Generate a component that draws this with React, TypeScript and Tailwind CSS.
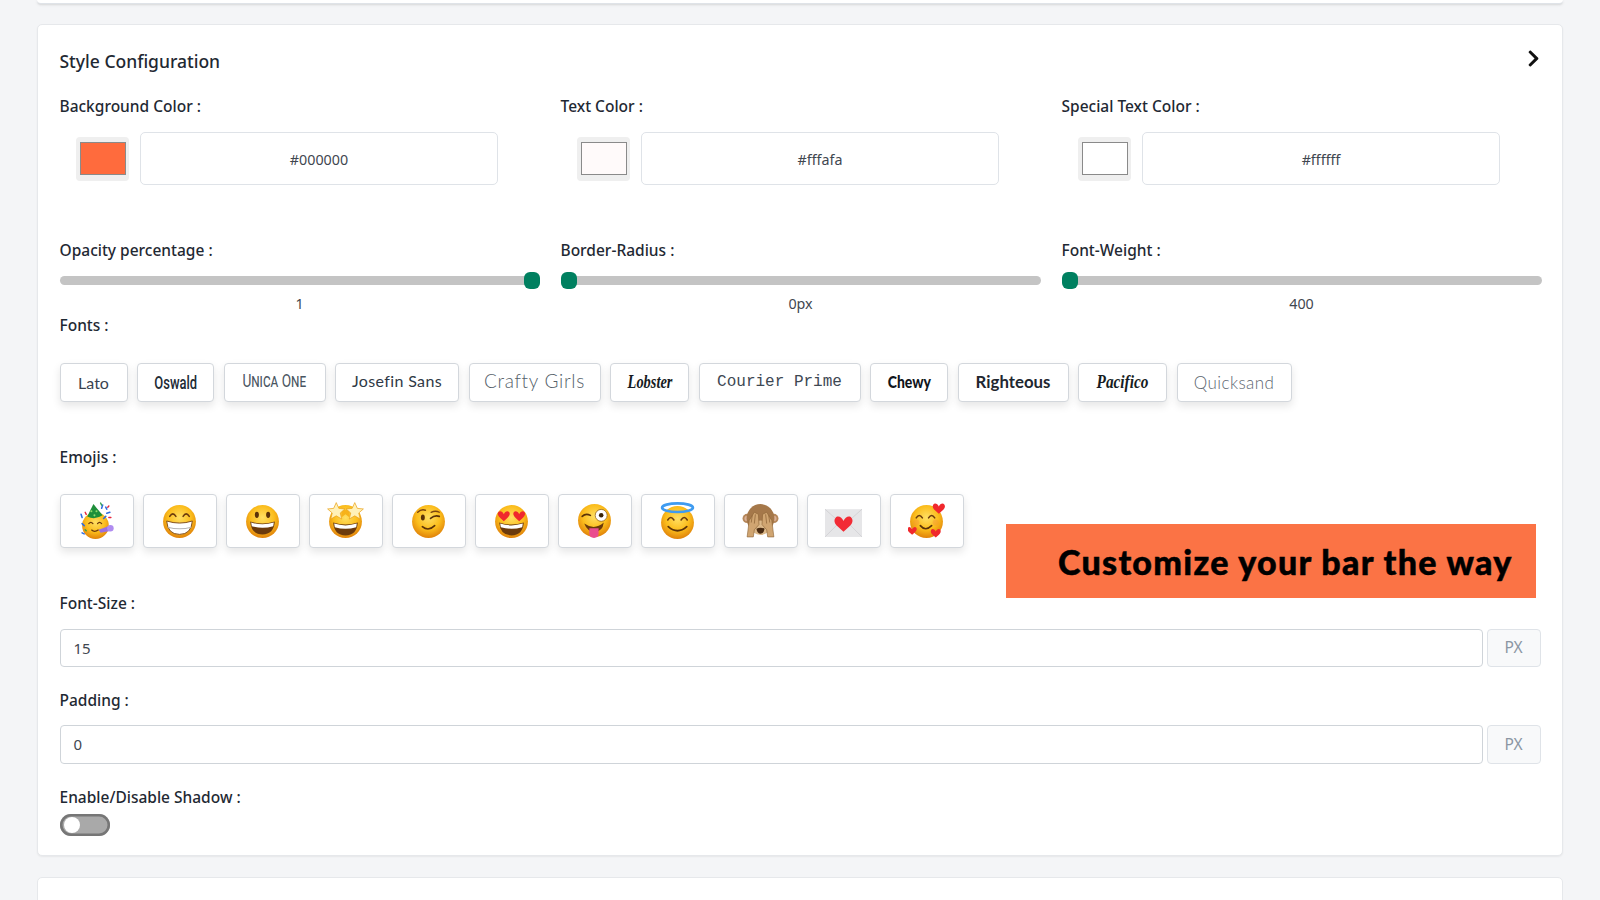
import React from "react";
import { FaChevronRight } from "react-icons/fa";

const Face = ({ cx = 18, cy = 19, r = 16 }: { cx?: number; cy?: number; r?: number }) => (
  <>
    <defs>
      <radialGradient id="emojiFace" cx="50%" cy="38%" r="62%">
        <stop offset="0%" stopColor="#ffdf63" />
        <stop offset="58%" stopColor="#fbbd1c" />
        <stop offset="100%" stopColor="#e0820a" />
      </radialGradient>
    </defs>
    <circle cx={cx} cy={cy} r={r} fill="url(#emojiFace)" />
  </>
);

const Svg = ({ children }: { children: React.ReactNode }) => (
  <svg viewBox="0 0 36 36" className="w-[37px] h-[37px] block -translate-y-[1px]">
    {children}
  </svg>
);

const Heart = ({ x, y, s, c = "#f0282d" }: { x: number; y: number; s: number; c?: string }) => (
  <path
    transform={`translate(${x} ${y}) scale(${s})`}
    d="M0 3.6C-1 1 -4 -.6 -5.6 1.4C-7 3.2 -6 5.6 -4 7.4L0 11L4 7.4C6 5.6 7 3.2 5.6 1.4C4 -.6 1 1 0 3.6Z"
    fill={c}
  />
);

const ArcEye = ({ x, y }: { x: number; y: number }) => (
  <path d={`M${x - 3} ${y + 1.5}Q${x} ${y - 3.4} ${x + 3} ${y + 1.5}`} fill="none" stroke="#6b3a0c" strokeWidth="1.5" strokeLinecap="round" />
);

const Star = ({ x, y, s }: { x: number; y: number; s: number }) => (
  <path
    transform={`translate(${x} ${y}) scale(${s})`}
    d="M0 -6L1.8 -2L6 -1.6L2.8 1.2L3.8 5.4L0 3.2L-3.8 5.4L-2.8 1.2L-6 -1.6L-1.8 -2Z"
    fill="#fff1b8"
    stroke="#eaa21b"
    strokeWidth=".5"
  />
);

const OpenMouth = ({ top = 19 }: { top?: number }) => (
  <>
    <path d={`M6 ${top}Q18 ${top + 4} 30 ${top}Q29 ${top + 12.5} 18 ${top + 12.5}Q7 ${top + 12.5} 6 ${top}Z`} fill="#6b3a0c" />
    <path d={`M7 ${top + 1}Q18 ${top + 4.5} 29 ${top + 1}L28.4 ${top + 4.5}Q18 ${top + 7.5} 7.6 ${top + 4.5}Z`} fill="#fff" />
  </>
);

const emojis: React.ReactNode[] = [
  <Svg key="party">
    <Face cx={17} cy={23} r={13} />
    <path d="M9 14L15 2L24 13Q16 18 9 14Z" fill="#1f8f3a" />
    <circle cx="13" cy="9" r="1" fill="#8fdc6a" />
    <circle cx="18" cy="9" r="1" fill="#8fdc6a" />
    <circle cx="16" cy="13" r="1" fill="#8fdc6a" />
    <path d="M10.5 21Q12.5 18.5 14.5 21M19 21Q21 18.5 23 21" fill="none" stroke="#6b3a0c" strokeWidth="1.2" strokeLinecap="round" />
    <path d="M20 27L31 23L32.5 28L22 30Z" fill="#9a6fe0" />
    <circle cx="31.5" cy="25.5" r="3.2" fill="#b08cf0" />
    <path d="M13 27Q16 30 20 27" fill="none" stroke="#6b3a0c" strokeWidth="1.2" />
    <path d="M3 12l1 3M4 21l2 2M4 30l2 1M27 5l1 2M24 3l-1 3M31 10l-3 1M27 14l-2 2" stroke="#2f6de0" strokeWidth="1.5" strokeLinecap="round" />
    <path d="M7 10l1 2M30 4l-1 1M32 15l-2 0" stroke="#e8263e" strokeWidth="1.4" strokeLinecap="round" />
    <path d="M22 1l1 2M7 27l1 1" stroke="#2e9e4f" strokeWidth="1.3" strokeLinecap="round" />
  </Svg>,
  <Svg key="beam">
    <Face />
    <ArcEye x={11.5} y={12.5} />
    <ArcEye x={24.5} y={12.5} />
    <path d="M5.5 18.5Q18 22.5 30.5 18.5Q29.5 31.5 18 31.5Q6.5 31.5 5.5 18.5Z" fill="#fff" stroke="#7a4410" strokeWidth=".9" />
    <path d="M6.5 24.5Q18 27.5 29.5 24.5" fill="none" stroke="#b5b5b5" strokeWidth="1" />
  </Svg>,
  <Svg key="grin">
    <Face />
    <ellipse cx="12.5" cy="12.5" rx="2" ry="3" fill="#5b3208" />
    <ellipse cx="23.5" cy="12.5" rx="2" ry="3" fill="#5b3208" />
    <OpenMouth />
  </Svg>,
  <Svg key="star">
    <Face />
    <OpenMouth top={20} />
    <path d="M14 5l4 3l4 -3l0 10l-4 -3l-4 3Z" fill="#f7b21a" />
    <Star x={9} y={9} s={1.4} />
    <Star x={27} y={9} s={1.4} />
  </Svg>,
  <Svg key="wink">
    <Face />
    <ellipse cx="12.5" cy="15" rx="1.9" ry="2.9" fill="#5b3208" />
    <path d="M7.5 10Q11 6.5 15 8" fill="none" stroke="#7a4410" strokeWidth="1.4" strokeLinecap="round" />
    <path d="M20 16Q24 12.5 28.5 14" fill="none" stroke="#5b3208" strokeWidth="1.6" strokeLinecap="round" />
    <path d="M20.5 10Q25 8 28.5 10" fill="none" stroke="#7a4410" strokeWidth="1.3" strokeLinecap="round" />
    <path d="M12 24Q18 29 24 23" fill="none" stroke="#5b3208" strokeWidth="1.6" strokeLinecap="round" />
  </Svg>,
  <Svg key="hearteyes">
    <Face />
    <OpenMouth top={20} />
    <Heart x={10.5} y={8.5} s={.92} />
    <Heart x={25.5} y={8.5} s={.92} />
  </Svg>,
  <Svg key="tongue">
    <Face cy={18} />
    <path d="M6 14Q9.5 10.5 14 13" fill="none" stroke="#5b3208" strokeWidth="1.6" strokeLinecap="round" />
    <circle cx="24.5" cy="13" r="5.8" fill="#fff" stroke="#8a5a14" strokeWidth=".7" />
    <circle cx="24.5" cy="13" r="2.2" fill="#3a2408" />
    <path d="M8 21Q18 28 27 20Q26 29 18 29Q11 29 8 21Z" fill="#6b3a0c" />
    <path d="M13 25.5H22V31Q22 35 17.5 35Q13 35 13 31Z" fill="#ea4d8f" />
  </Svg>,
  <Svg key="halo">
    <Face cy={20} />
    <ellipse cx="18" cy="5.5" rx="15" ry="4.2" fill="none" stroke="#3f9bf0" strokeWidth="2.6" />
    <ArcEye x={11.5} y={16} />
    <ArcEye x={24.5} y={16} />
    <path d="M9 24Q18 32 27 24" fill="none" stroke="#5b3208" strokeWidth="1.7" strokeLinecap="round" />
  </Svg>,
  <Svg key="monkey">
    <circle cx="5" cy="16" r="4.5" fill="#b5875a" />
    <circle cx="31" cy="16" r="4.5" fill="#b5875a" />
    <circle cx="5" cy="16" r="2.6" fill="#dcb196" />
    <circle cx="31" cy="16" r="2.6" fill="#dcb196" />
    <ellipse cx="18" cy="16" rx="13.5" ry="14" fill="#a5784a" />
    <ellipse cx="18" cy="25" rx="9" ry="7" fill="#dcb98a" />
    <path d="M14 26Q18 24 22 26Q21 31 18 31Q15 31 14 26Z" fill="#4a2c12" />
    <path d="M5 34L7 18L12 10L16 12L16.5 22L12 27L11 34Z" fill="#d0a571" stroke="#8b6235" strokeWidth=".6" />
    <path d="M31 34L29 18L24 10L20 12L19.5 22L24 27L25 34Z" fill="#d0a571" stroke="#8b6235" strokeWidth=".6" />
    <path d="M10 13L9 20M13 12L12 21M26 13L27 20M23 12L24 21" stroke="#8b6235" strokeWidth=".7" />
  </Svg>,
  <Svg key="letter">
    <rect x="0" y="7" width="36" height="27" fill="#e6e6e8" />
    <path d="M0 7L18 23L36 7M0 34L14 20M36 34L22 20" fill="none" stroke="#cfcfd2" strokeWidth=".8" />
    <Heart x={18} y={13.5} s={1.4} c="#f22b35" />
  </Svg>,
  <Svg key="hearts">
    <Face cy={19} r={16} />
    <ArcEye x={11} y={14} />
    <ArcEye x={23} y={14} />
    <circle cx="8" cy="20" r="3" fill="#f08a3c" opacity=".35" />
    <circle cx="27" cy="20" r="3" fill="#f08a3c" opacity=".35" />
    <path d="M12 23Q17 29 23 23" fill="none" stroke="#5b3208" strokeWidth="1.6" strokeLinecap="round" />
    <Heart x={30} y={1} s={.95} />
    <Heart x={4} y={24} s={.72} />
    <Heart x={27} y={26} s={.78} />
  </Svg>,
];

const fonts: { name: string; w: string; cls: string }[] = [
  { name: "Lato", w: "w-[68px]", cls: "font-['Lato'] text-[16px] text-[#3a4350]" },
  { name: "Oswald", w: "w-[77px]", cls: "font-['Roboto'] font-medium text-[18px] scale-x-[0.72] text-[#222b36]" },
  { name: "Unica One", w: "w-[102px]", cls: "font-['Roboto'] [font-variant:small-caps] text-[19px] scale-x-[0.72] -translate-y-[1px] text-[#4a5561]" },
  { name: "Josefin Sans", w: "w-[124px]", cls: "font-['Lato'] text-[16px] tracking-[0.35px] -translate-y-[2px] text-[#2f3945]" },
  { name: "Crafty Girls", w: "w-[132px]", cls: "font-['Lato'] font-light text-[19px] tracking-[0.7px] -translate-y-[1px] text-[#555f6a]" },
  { name: "Lobster", w: "w-[79px]", cls: "font-['Liberation_Serif'] font-bold italic text-[18px] scale-x-[0.8] text-[#161c22]" },
  { name: "Courier Prime", w: "w-[162px]", cls: "font-['Liberation_Mono'] text-[16px] -translate-y-[1px] text-[#3e4853]" },
  { name: "Chewy", w: "w-[78px]", cls: "font-['Lato'] font-black text-[17px] scale-x-[0.82] -translate-y-[1px] text-[#10151b]" },
  { name: "Righteous", w: "w-[111px]", cls: "font-['Lato'] font-bold text-[16.8px] -translate-y-[1px] text-[#1f2730]" },
  { name: "Pacifico", w: "w-[89px]", cls: "font-['Liberation_Serif'] font-bold italic text-[18px] scale-x-[0.85] text-[#161c22]" },
  { name: "Quicksand", w: "w-[115px]", cls: "font-['Lato'] font-light text-[17px] tracking-[0.4px] text-[#5d6670]" },
];

const ColorField = ({ label, swatch, value }: { label: string; swatch: string; value: string }) => (
  <div>
    <div className="h-[24px] leading-[24px] text-[15.5px] font-medium text-[#1f2933]">{label}</div>
    <div className="mt-[14px] flex items-center pl-[16.5px]">
      <div className="w-[53px] h-[44px] rounded-[4px] bg-[#efefef] flex items-center justify-center">
        <div className="w-[46px] h-[33px] border border-[#8a8a8a]" style={{ backgroundColor: swatch }} />
      </div>
      <div className="ml-[11px] w-[358px] h-[53px] rounded-[5px] border border-[#dfe3e8] flex items-center justify-center text-[14.3px] text-[#3f4750] pt-[2px]">
        {value}
      </div>
    </div>
  </div>
);

const SliderField = ({ label, value, end }: { label: string; value: string; end?: boolean }) => (
  <div>
    <div className="h-[24px] leading-[24px] text-[15.5px] font-medium text-[#1f2933]">{label}</div>
    <div className="relative mt-[10px] h-[17px] flex items-center">
      <div className="w-full h-[9px] rounded-full bg-[#c4c4c4]" />
      <div className={`absolute top-0 h-[17px] w-[16px] rounded-[6px] bg-[#008060] ${end ? "right-0" : "left-0"}`} />
    </div>
    <div className="mt-[5px] h-[20px] leading-[20px] text-center text-[14.3px] text-[#3f4750]">{value}</div>
  </div>
);

const PxInput = ({ value, cls }: { value: string; cls: string }) => (
  <div className={`mt-[15px] flex gap-[4px] ${cls}`}>
    <div className="flex-1 rounded-[4px] border border-[#cfd4d9] flex items-center pl-[13px] text-[15px] text-[#3f4750]">{value}</div>
    <div className="w-[54px] rounded-[4px] border border-[#dfe3e8] bg-[#f8f9fa] flex items-center justify-center text-[15.5px] text-[#8b96a3]">PX</div>
  </div>
);

const Label = ({ children }: { children: React.ReactNode }) => (
  <div className="h-[20px] leading-[20px] text-[15.5px] font-medium text-[#1f2933]">{children}</div>
);

export default function App() {
  return (
    <div className="h-[900px] overflow-hidden bg-[#f4f5f7] px-[37px] font-['Noto_Sans',sans-serif]">
      <div className="h-[4px] bg-white border-b border-[#dfe3e8] rounded-b-[4px] shadow-sm" />
      <div className="relative mt-[20px] h-[832px] w-[1526px] bg-white border border-[#e6e8eb] rounded-[5px] shadow-[0_1px_2px_rgba(0,0,0,0.06)] pl-[21.5px] pr-[21.5px] pt-[24px]">
        <div className="flex justify-between h-[24px]">
          <div className="leading-[24px] text-[17.5px] font-medium text-[#1f2933]">Style Configuration</div>
          <FaChevronRight className="text-[19px] text-[#111] -mr-[2px] mt-[0px]" />
        </div>
        <div className="mt-[21px] grid grid-cols-[480px_480px_480px] gap-x-[21px]">
          <ColorField label="Background Color :" swatch="#ff6b3d" value="#000000" />
          <ColorField label="Text Color :" swatch="#fffafa" value="#fffafa" />
          <ColorField label="Special Text Color :" swatch="#ffffff" value="#ffffff" />
        </div>
        <div className="mt-[53px] grid grid-cols-[480px_480px_480px] gap-x-[21px]">
          <SliderField label="Opacity percentage :" value="1" end />
          <SliderField label="Border-Radius :" value="0px" />
          <SliderField label="Font-Weight :" value="400" />
        </div>
        <div className="mt-[1px]"><Label>Fonts :</Label></div>
        <div className="mt-[28px] flex gap-[9.5px]">
          {fonts.map((f) => (
            <div key={f.name} className={`${f.w} h-[39px] rounded-[4px] border border-[#d3d7dc] bg-white shadow-[0_4px_8px_rgba(0,0,0,0.1)] flex items-center justify-center whitespace-nowrap`}>
              <span className={`inline-block ${f.cls}`}>{f.name}</span>
            </div>
          ))}
        </div>
        <div className="mt-[45px]"><Label>Emojis :</Label></div>
        <div className="mt-[27px] flex gap-[9px]">
          {emojis.map((e, i) => (
            <div key={i} className="w-[74px] h-[54px] rounded-[4px] border border-[#d3d7dc] bg-white shadow-[0_4px_8px_rgba(0,0,0,0.1)] flex items-center justify-center">
              {e}
            </div>
          ))}
        </div>
        <div className="mt-[45px]"><Label>Font-Size :</Label></div>
        <PxInput value="15" cls="mt-[16px] h-[38px]" />
        <div className="mt-[23px]"><Label>Padding :</Label></div>
        <PxInput value="0" cls="h-[39px]" />
        <div className="mt-[23px]"><Label>Enable/Disable Shadow :</Label></div>
        <div className="relative mt-[7px] w-[50px] h-[22px] rounded-full bg-[#a9a9a9] shadow-[inset_0_0_0_2.5px_#767676]">
          <div className="absolute left-[4px] top-[3px] w-[16px] h-[16px] rounded-full bg-white" />
        </div>
        <div className="absolute left-[968px] top-[499px] w-[530px] h-[74px] bg-[#fb7345] flex items-center overflow-hidden">
          <span className="inline-block ml-[52px] font-['Lato'] font-black text-[34px] tracking-[1.3px] [-webkit-text-stroke:0.5px_black] text-black whitespace-nowrap">Customize your bar the way</span>
        </div>
      </div>
      <div className="mt-[21px] h-[60px] w-[1526px] bg-white border border-[#e6e8eb] rounded-[5px]" />
    </div>
  );
}
